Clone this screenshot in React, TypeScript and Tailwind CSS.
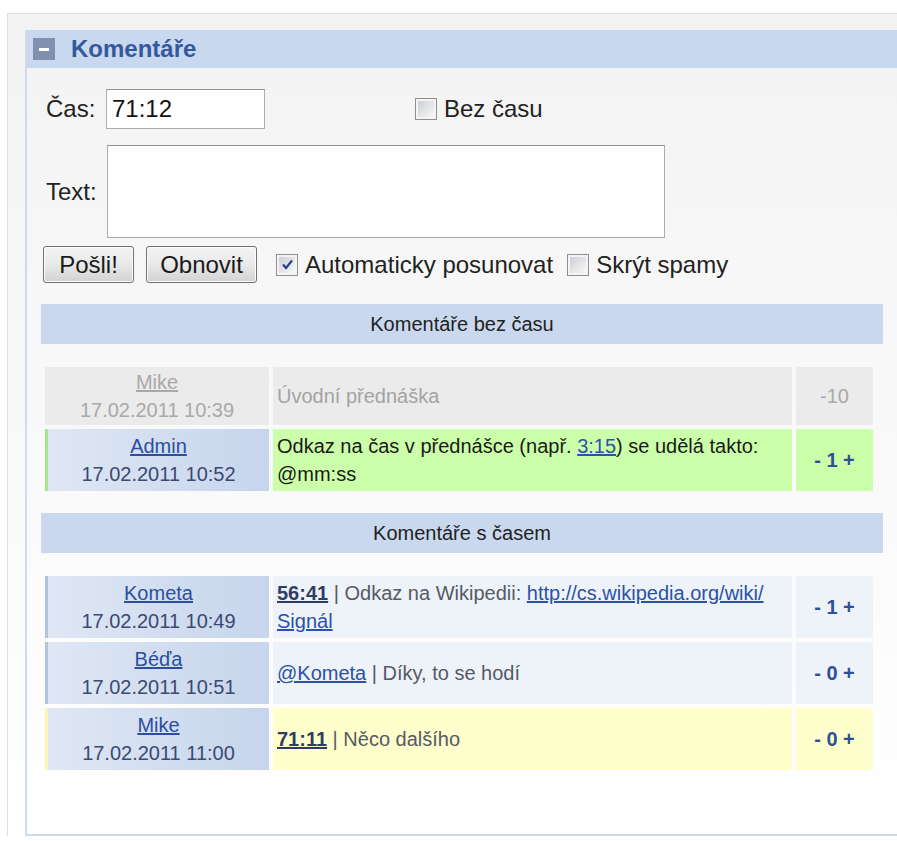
import type { ReactNode } from 'react'

type Tone = 'spam' | 'admin' | 'normal' | 'mine'

type Comment = {
  id: number
  author: string
  date: string
  tone: Tone
  votes: string
  body: ReactNode
  wraps?: boolean
}

const leftTone: Record<Tone, string> = {
  spam: 'bg-[#ebebeb] text-[#a9a9a9]',
  admin: 'border-l-[3px] border-[#a8e68e] bg-gradient-to-r from-[#dfe7f4] to-[#c6d5ec] text-[#3b4a72]',
  normal: 'border-l-[3px] border-[#b2c3e2] bg-gradient-to-r from-[#dfe7f4] to-[#c6d5ec] text-[#3b4a72]',
  mine: 'border-l-[3px] border-[#faf6b4] bg-gradient-to-r from-[#dfe7f4] to-[#c6d5ec] text-[#3b4a72]',
}

const midTone: Record<Tone, string> = {
  spam: 'bg-[#ebebeb] text-[#a3a3a3]',
  admin: 'bg-[#ccffaa] text-[#1a1a1a]',
  normal: 'bg-[#eef2f9] text-[#555a66]',
  mine: 'bg-[#ffffcc] text-[#555a66]',
}

// vote column shares the row background but keeps its own text colour
const voteTone: Record<Tone, string> = {
  spam: 'bg-[#ebebeb] text-[#a9a9a9]',
  admin: 'bg-[#ccffaa] font-bold text-[#2f4f9a]',
  normal: 'bg-[#eef2f9] font-bold text-[#2f4f9a]',
  mine: 'bg-[#ffffcc] font-bold text-[#2f4f9a]',
}

const timeLink = 'font-bold text-[#2e3d62] underline'
const link = 'text-[#2b52a6] underline'

const withoutTime: Comment[] = [
  { id: 1, author: 'Mike', date: '17.02.2011 10:39', tone: 'spam', votes: '-10', body: 'Úvodní přednáška' },
  {
    id: 2,
    author: 'Admin',
    date: '17.02.2011 10:52',
    tone: 'admin',
    votes: '1',
    wraps: true,
    body: (
      <>
        Odkaz na čas v přednášce (např. <a className={link}>3:15</a>) se udělá takto: @mm:ss
      </>
    ),
  },
]

const withTime: Comment[] = [
  {
    id: 3,
    author: 'Kometa',
    date: '17.02.2011 10:49',
    tone: 'normal',
    votes: '1',
    wraps: true,
    body: (
      <>
        <a className={timeLink}>56:41</a> | Odkaz na Wikipedii:{' '}
        <a className={link}>
          http://cs.wikipedia.org/wiki/<wbr />Signál
        </a>
      </>
    ),
  },
  {
    id: 4,
    author: 'Béďa',
    date: '17.02.2011 10:51',
    tone: 'normal',
    votes: '0',
    body: (
      <>
        <a className={link}>@Kometa</a> | Díky, to se hodí
      </>
    ),
  },
  {
    id: 5,
    author: 'Mike',
    date: '17.02.2011 11:00',
    tone: 'mine',
    votes: '0',
    body: (
      <>
        <a className={timeLink}>71:11</a> | Něco dalšího
      </>
    ),
  },
]

function CheckBox({ checked }: { checked?: boolean }) {
  return (
    <span className="inline-flex h-[22px] w-[22px] shrink-0 items-center justify-center border border-[#8e8f8f] bg-[#f4f4f4]">
      <span className="flex h-[16px] w-[16px] items-center justify-center bg-gradient-to-br from-[#cdd0d6] to-[#f7f7f7]">
        {checked && (
          <svg width="13" height="13" viewBox="0 0 13 13">
            <path d="M2 6.5 L5 10 L11 2.5" fill="none" stroke="#2c3f86" strokeWidth="2.2" />
          </svg>
        )}
      </span>
    </span>
  )
}

function Button({ children, width }: { children: ReactNode; width: string }) {
  return (
    <button
      className={`${width} h-[37px] rounded-[3px] border border-[#707070] bg-gradient-to-b from-[#f4f4f4] via-[#e9e9e9] to-[#d2d2d2] text-[24px] leading-none text-[#1a1a1a] shadow-[inset_0_0_0_1px_#fcfcfc]`}
    >
      {children}
    </button>
  )
}

function SectionTitle({ children }: { children: ReactNode }) {
  return (
    <div className="flex h-[40px] items-center justify-center bg-[#c9d8ee] text-[20px] text-[#222]">{children}</div>
  )
}

function CommentRow({ c }: { c: Comment }) {
  const spam = c.tone === 'spam'
  return (
    <>
      <div
        className={`flex flex-col items-center justify-center text-[20px] leading-[28px] ${spam ? 'py-[1px]' : 'py-[3px]'} ${leftTone[c.tone]}`}
      >
        <a className={spam ? 'text-[#a9a9a9] underline' : 'text-[#2b4f9e] underline'}>{c.author}</a>
        <span>{c.date}</span>
      </div>
      <div
        className={`flex py-[3px] pl-[4px] pr-[6px] text-[20px] leading-[28px] ${c.wraps ? 'items-start' : 'items-center'} ${midTone[c.tone]}`}
      >
        <div>{c.body}</div>
      </div>
      <div className={`flex items-center justify-center text-[20px] ${voteTone[c.tone]}`}>
        {spam ? c.votes : <span>- {c.votes} +</span>}
      </div>
    </>
  )
}

function CommentTable({ rows }: { rows: Comment[] }) {
  return (
    <div className="ml-[4px] mt-[23px] grid w-[828px] grid-cols-[224px_519px_77px] gap-[4px]">
      {rows.map(c => (
        <CommentRow key={c.id} c={c} />
      ))}
    </div>
  )
}

export default function App() {
  return (
    <div className="min-h-[841px] bg-white font-['Liberation_Sans',Arial,sans-serif] pt-[13px] pl-[7px]">
      <div className="border-l border-t border-[#dedede] bg-gradient-to-b from-[#f3f3f3] to-[#ffffff] pt-[16px] pl-[17px]">
        <section className="border-b-2 border-l-2 border-[#cddaf0]">
          <div className="flex h-[38px] items-center bg-[#c8d8ee] pl-[6px]">
            <span className="flex h-[22px] w-[22px] items-center justify-center bg-[#8090ae]">
              <span className="h-[3px] w-[10px] bg-white" />
            </span>
            <h2 className="ml-[16px] text-[24px] font-bold text-[#34589e]">Komentáře</h2>
          </div>

          <div className="pl-[16px] pt-[21px] text-[24px] text-[#222]">
            <div className="flex h-[40px] items-center">
              <label className="w-[63px] pl-[3px]">Čas:</label>
              <input
                defaultValue="71:12"
                className="h-[40px] w-[159px] border border-[#abadb3] border-t-[#8e9199] bg-white pl-[5px] text-[24px] text-[#111] outline-none"
              />
              <label className="ml-[150px] flex items-center gap-[7px]">
                <CheckBox />
                Bez času
              </label>
            </div>

            <div className="mt-[16px] flex items-center">
              <label className="w-[64px] pl-[3px]">Text:</label>
              <textarea className="h-[93px] w-[558px] resize-none border border-[#abadb3] border-t-[#8e9199] bg-white outline-none" />
            </div>

            <div className="mt-[8px] flex items-center">
              <Button width="w-[91px]">Pošli!</Button>
              <span className="ml-[12px]">
                <Button width="w-[111px]">Obnovit</Button>
              </span>
              <label className="ml-[19px] flex items-center gap-[7px]">
                <CheckBox checked />
                Automaticky posunovat
              </label>
              <label className="ml-[14px] flex items-center gap-[7px]">
                <CheckBox />
                Skrýt spamy
              </label>
            </div>
          </div>

          <div className="ml-[14px] mt-[21px] w-[842px] pb-[64px]">
            <SectionTitle>Komentáře bez času</SectionTitle>
            <CommentTable rows={withoutTime} />
            <div className="mt-[22px]">
              <SectionTitle>Komentáře s časem</SectionTitle>
            </div>
            <CommentTable rows={withTime} />
          </div>
        </section>
      </div>
    </div>
  )
}
